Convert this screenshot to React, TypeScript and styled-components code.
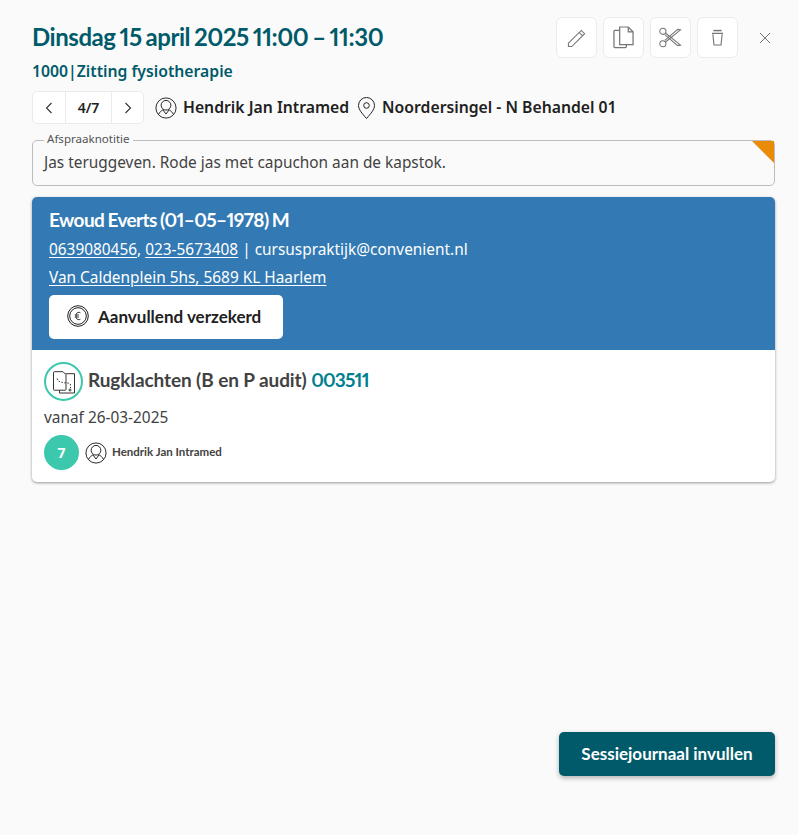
import React from "react";
import styled, { createGlobalStyle } from "styled-components";

const headFont = `"Lato", "Noto Sans", sans-serif`;

const Global = createGlobalStyle`
  html, body { margin: 0; padding: 0; background: #fafafa; }
  body { font-family: "Noto Sans", "Liberation Sans", sans-serif; color: #212121; }
  #root { min-height: 835px; }
`;

const Page = styled.div`
  height: 835px;
  box-sizing: border-box;
  padding: 16px 23px 0 32px;
  display: flex;
  flex-direction: column;
  position: relative;
`;

const HeaderRow = styled.div`
  display: flex;
  justify-content: space-between;
  align-items: flex-start;
`;

const Title = styled.h1`
  margin: 4px 0 0;
  font-family: ${headFont};
  font-size: 24px;
  line-height: 34px;
  font-weight: 700;
  font-variant-numeric: proportional-nums;
  letter-spacing: -0.45px;
  word-spacing: -1.5px;
  color: #005a6a;
  white-space: nowrap;
`;

const Actions = styled.div`
  display: flex;
  align-items: center;
  gap: 6px;
  margin: 1px -11px 0 0;
`;

const ActionButton = styled.button`
  width: 41px;
  height: 41px;
  padding: 0;
  display: flex;
  align-items: center;
  justify-content: center;
  background: #fff;
  border: 1px solid #ebebef;
  border-radius: 6px;
  color: #757575;
`;

const CloseButton = styled.button`
  width: 42px;
  height: 41px;
  padding: 0;
  display: flex;
  align-items: center;
  justify-content: center;
  background: none;
  border: 0;
  color: #757575;
`;

const Subtitle = styled.div`
  margin-top: 3px;
  font-size: 15.75px;
  line-height: 20px;
  font-weight: 600;
  color: #005a6a;
  white-space: nowrap;
`;

const InfoRow = styled.div`
  display: flex;
  align-items: center;
  margin-top: 10px;
  height: 33px;
`;

const Pager = styled.div`
  display: flex;
  height: 33px;
  box-sizing: border-box;
  background: #fff;
  border: 1px solid #ebebef;
  border-radius: 5px;
  margin-right: 11px;
`;

const PagerCell = styled.div<{ $w: number; $line?: boolean }>`
  width: ${(p) => p.$w}px;
  display: flex;
  align-items: center;
  justify-content: center;
  font-size: 14px;
  font-weight: 600;
  color: #212121;
  border-left: ${(p) => (p.$line ? "1px solid #ebebef" : "0")};
`;

const InfoText = styled.span`
  font-size: 15.75px;
  line-height: 22px;
  font-weight: 600;
  color: #212121;
  margin: 0 8px 2px 6px;
  white-space: nowrap;
`;

const NoteBox = styled.fieldset`
  position: relative;
  margin: 8px 0 0;
  padding: 0 11px;
  height: 54px;
  box-sizing: border-box;
  border: 1px solid #bdbdbd;
  border-radius: 5px;
`;

const NoteLegend = styled.legend`
  margin-left: 0;
  padding: 0 3px 4px;
  font-size: 11.55px;
  line-height: 13px;
  color: #555;
`;

const NoteText = styled.div`
  font-size: 15.4px;
  line-height: 20px;
  margin-top: 4px;
  color: #424242;
`;

const NoteCorner = styled.div`
  position: absolute;
  top: -8px;
  right: 0;
  width: 0;
  height: 0;
  border-style: solid;
  border-width: 0 22px 22px 0;
  border-color: transparent #e98b07 transparent transparent;
`;

const Card = styled.section`
  margin-top: 11px;
  border-radius: 5px;
  background: #fff;
  box-shadow: 0 1px 3px rgba(0, 0, 0, 0.4);
  overflow: hidden;
`;

const PatientHead = styled.div`
  background: #337ab4;
  color: #fff;
  height: 153px;
  box-sizing: border-box;
  padding: 10px 17px 0;
`;

const PatientName = styled.div`
  font-family: ${headFont};
  font-size: 19px;
  line-height: 25px;
  font-weight: 700;
  font-variant-numeric: proportional-nums;
  letter-spacing: -0.6px;
  word-spacing: -0.8px;
  white-space: nowrap;
`;

const ContactLine = styled.div<{ $mt: number }>`
  font-size: 15.4px;
  line-height: 21px;
  margin-top: ${(p) => p.$mt}px;
  white-space: nowrap;
  a { color: #fff; text-decoration: underline; text-underline-offset: 2px; text-decoration-thickness: 1px; }
`;

const InsuredBadge = styled.div`
  margin-top: 7px;
  width: 234px;
  height: 44px;
  box-sizing: border-box;
  background: #fff;
  border-radius: 5px;
  display: flex;
  align-items: center;
  padding: 0 0 2px 18px;
  gap: 9px;
  font-family: ${headFont};
  font-size: 17px;
  font-weight: 700;
  color: #212121;
`;

const CardBody = styled.div`
  height: 132px;
  box-sizing: border-box;
  padding: 12px 12px 0;
`;

const TreatmentRow = styled.div`
  display: flex;
  align-items: center;
  gap: 5px;
`;

const TreatmentRing = styled.div`
  width: 39px;
  height: 39px;
  box-sizing: border-box;
  border: 2px solid #3cc8ad;
  border-radius: 50%;
  display: flex;
  align-items: center;
  justify-content: center;
`;

const TreatmentTitle = styled.div`
  font-family: ${headFont};
  font-size: 19px;
  line-height: 24px;
  margin-top: -3px;
  font-weight: 700;
  letter-spacing: -0.1px;
  color: #424242;
  white-space: nowrap;
`;

const TreatmentCode = styled.span`
  color: #00808f;
  font-variant-numeric: proportional-nums;
  letter-spacing: -0.8px;
`;

const SinceText = styled.div`
  margin-top: 7px;
  font-size: 15.4px;
  line-height: 20px;
  color: #424242;
`;

const TherapistRow = styled.div`
  margin-top: 7px;
  display: flex;
  align-items: center;
`;

const CountBubble = styled.div`
  width: 35px;
  height: 35px;
  box-sizing: border-box;
  padding-bottom: 1px;
  border-radius: 50%;
  background: #3cc8ad;
  color: #fff;
  font-size: 14px;
  font-weight: 700;
  display: flex;
  align-items: center;
  justify-content: center;
  margin-right: 6px;
`;

const TherapistName = styled.span`
  margin: 0 0 2px 5px;
  font-family: ${headFont};
  font-size: 11.5px;
  font-weight: 700;
  color: #424242;
`;

const PrimaryButton = styled.button`
  position: absolute;
  right: 23px;
  top: 732px;
  width: 216px;
  height: 44px;
  padding: 0 0 2px;
  border: 0;
  border-radius: 5px;
  background: #005a6a;
  color: #fff;
  font-family: ${headFont};
  font-size: 17px;
  font-weight: 700;
  box-shadow: 0 2px 5px rgba(0, 0, 0, 0.3);
`;

const Person = ({ size = 22 }: { size?: number }) => (
  <svg width={size} height={size} viewBox="0 0 24 24" fill="none" stroke="#212121" strokeWidth="1.05" style={{ flex: "none" }}>
    <circle cx="12" cy="12" r="11" />
    <circle cx="12" cy="9" r="5.3" />
    <path d="M3.9 19 C5 16.4 7 15 8.6 14 L12 18.6 L15.4 14 C17 15 19 16.4 20.1 19" />
  </svg>
);

const Pin = () => (
  <svg width="19" height="24" viewBox="1 0 18 24" fill="none" stroke="#212121" strokeWidth="1" style={{ flex: "none" }}>
    <path d="M10 22.5 C6 18 2 13.5 2 9.5 A8 8 0 0 1 18 9.5 C18 13.5 14 18 10 22.5 Z" />
    <circle cx="10" cy="9.5" r="2.8" />
  </svg>
);

const Chevron = ({ dir }: { dir: "l" | "r" }) => (
  <svg width="8" height="12" viewBox="0 0 8 12" fill="none" stroke="#333" strokeWidth="1.1">
    <path d={dir === "l" ? "M6.5 1 L1.5 6 L6.5 11" : "M1.5 1 L6.5 6 L1.5 11"} />
  </svg>
);

const Euro = () => (
  <svg width="22" height="22" viewBox="0 0 22 22" fill="none" stroke="#212121" style={{ flex: "none" }}>
    <circle cx="11" cy="11" r="10.3" strokeWidth="1" />
    <circle cx="11" cy="11" r="8.3" strokeWidth="1" />
    <path d="M13.4 7.8 C12 6.8 9.6 7.2 9.1 9.5 L9.1 12.5 C9.6 14.8 12 15.2 13.4 14.2 M7.8 10 H12 M7.8 12 H12" strokeWidth="0.9" />
  </svg>
);

const TreatmentIcon = () => (
  <svg width="24" height="24" viewBox="-1 -1 24 24" fill="none" stroke="#333" strokeWidth="1" strokeLinejoin="round">
    <path d="M12.5 2.7 H21.5 V22 H6.5 V19.2" />
    <path d="M1.5 0.7 H10 L13 3.7 V18.5 A0.8 0.8 0 0 1 12.2 19.2 H1.3 A0.8 0.8 0 0 1 0.5 18.5 V1.7 A1 1 0 0 1 1.5 0.7 Z" fill="#fff" />
    <path d="M4 7.5 C5 11 8 11 10 11.5 C13 12.5 17 11 17.5 14 V17" strokeDasharray="1.5 1.5" />
    <path d="M15.5 19 H18.5 M17 17.5 V20.5" />
  </svg>
);

export default function App() {
  return (
    <Page>
      <Global />
      <HeaderRow>
        <Title>Dinsdag 15 april 2025 11:00 – 11:30</Title>
        <Actions>
          <ActionButton aria-label="Bewerken">
            <svg width="20" height="20" viewBox="0 0 21 21" fill="none" stroke="currentColor" strokeWidth="1.1">
              <path d="M1.5 16 L15 2.5 L18.5 6 L5 19.5 L1.5 19.5 Z M12.8 4.7 L16.3 8.2" />
            </svg>
          </ActionButton>
          <ActionButton aria-label="Kopiëren">
            <svg width="21" height="23" viewBox="0 0 22 24" fill="none" stroke="currentColor" strokeWidth="1.3">
              <path d="M7 4.5 H2 A1 1 0 0 0 1 5.5 V21.5 A1 1 0 0 0 2 22.5 H13 A1 1 0 0 0 14 21.5 V19.5" />
              <path d="M7 1 H16 L21 6 V19.5 H7 Z M16 1 V6 H21" fill="#fff" />
            </svg>
          </ActionButton>
          <ActionButton aria-label="Knippen">
            <svg width="23" height="21" viewBox="0 0 24 22" fill="none" stroke="currentColor" strokeWidth="1.1">
              <circle cx="4" cy="4.5" r="3.2" />
              <circle cx="4" cy="17.5" r="3.2" />
              <path d="M6.8 6.3 L22.5 19 L19.5 19.5 L6 8 M6.8 15.7 L22.5 3 L19.5 2.5 L6 14" />
            </svg>
          </ActionButton>
          <ActionButton aria-label="Verwijderen">
            <svg width="13" height="18" viewBox="0 0 14 18" fill="none" stroke="currentColor" strokeWidth="1.2">
              <path d="M1 4 H13 M2 5 L3.2 16.5 H10.8 L12 5" />
              <path d="M2.5 1 H11.5" strokeWidth="1.6" />
            </svg>
          </ActionButton>
          <CloseButton aria-label="Sluiten">
            <svg width="12" height="12" viewBox="0 0 12 12" fill="none" stroke="currentColor" strokeWidth="1">
              <path d="M1 1 L11 11 M11 1 L1 11" />
            </svg>
          </CloseButton>
        </Actions>
      </HeaderRow>
      <Subtitle>1000|Zitting fysiotherapie</Subtitle>
      <InfoRow>
        <Pager>
          <PagerCell $w={32}><Chevron dir="l" /></PagerCell>
          <PagerCell $w={45} $line>4/7</PagerCell>
          <PagerCell $w={31} $line><Chevron dir="r" /></PagerCell>
        </Pager>
        <Person />
        <InfoText>Hendrik Jan Intramed</InfoText>
        <Pin />
        <InfoText>Noordersingel - N Behandel 01</InfoText>
      </InfoRow>
      <NoteBox>
        <NoteLegend>Afspraaknotitie</NoteLegend>
        <NoteText>Jas teruggeven. Rode jas met capuchon aan de kapstok.</NoteText>
        <NoteCorner />
      </NoteBox>
      <Card>
        <PatientHead>
          <PatientName>Ewoud Everts (01–05–1978) M</PatientName>
          <ContactLine $mt={7}>
            <a>0639080456</a>, <a>023-5673408</a> | cursuspraktijk@convenient.nl
          </ContactLine>
          <ContactLine $mt={7}>
            <a>Van Caldenplein 5hs, 5689 KL Haarlem</a>
          </ContactLine>
          <InsuredBadge>
            <Euro />
            Aanvullend verzekerd
          </InsuredBadge>
        </PatientHead>
        <CardBody>
          <TreatmentRow>
            <TreatmentRing><TreatmentIcon /></TreatmentRing>
            <TreatmentTitle>
              Rugklachten (B en P audit) <TreatmentCode>003511</TreatmentCode>
            </TreatmentTitle>
          </TreatmentRow>
          <SinceText>vanaf 26-03-2025</SinceText>
          <TherapistRow>
            <CountBubble>7</CountBubble>
            <Person />
            <TherapistName>Hendrik Jan Intramed</TherapistName>
          </TherapistRow>
        </CardBody>
      </Card>
      <PrimaryButton>Sessiejournaal invullen</PrimaryButton>
    </Page>
  );
}
